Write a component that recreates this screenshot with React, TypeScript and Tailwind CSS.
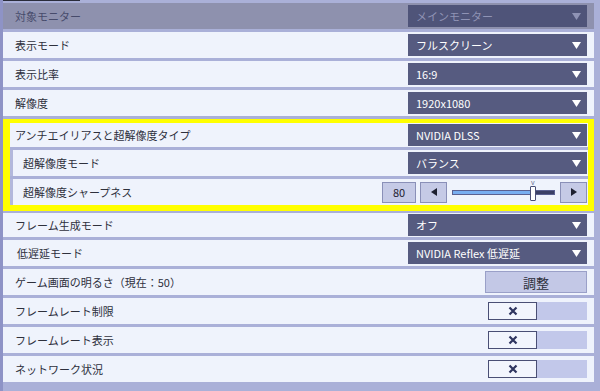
import React from "react";

const Tri = ({ color = "#ffffff" }: { color?: string }) => (
  <svg width="9" height="7" viewBox="0 0 9 7">
    <polygon points="0,0 9,0 4.5,7" fill={color} />
  </svg>
);

const Dropdown = ({ value, disabled = false }: { value: string; disabled?: boolean }) => (
  <div
    className={
      "w-[179px] h-[22px] flex items-center justify-between pl-[8px] pr-[6px] " +
      (disabled ? "bg-[#4f5479] text-[#8f93b5]" : "bg-[#565b80] text-white")
    }
  >
    <span className="text-[11px] leading-none">{value}</span>
    <Tri color={disabled ? "#8f93b5" : "#ffffff"} />
  </div>
);

const Row = ({
  label,
  children,
  h = "h-[26px]",
  pl = "pl-[12px]",
}: {
  label: string;
  children?: React.ReactNode;
  h?: string;
  pl?: string;
}) => (
  <div className={`${h} ${pl} pr-[7px] bg-[#eff3fc] flex items-center justify-between`}>
    <span className="text-[11px] text-[#2e303c] leading-none">{label}</span>
    {children}
  </div>
);

const Toggle = () => (
  <div className="flex h-[18px]">
    <div className="w-[49px] h-[18px] bg-[#f2f5fd] border border-[#4a4f75] flex items-center justify-center">
      <svg width="10" height="10" viewBox="0 0 10 10">
        <path d="M1.5 1.5 L8.5 8.5 M8.5 1.5 L1.5 8.5" stroke="#2f3560" strokeWidth="2.2" strokeLinecap="butt" />
      </svg>
    </div>
    <div className="w-[50px] h-[18px] bg-[#c2c8ea]" />
  </div>
);

const ArrowBtn = ({ dir }: { dir: "l" | "r" }) => (
  <div className="w-[27px] h-[21px] bg-[#c5cae6] border border-[#8a90b8] flex items-center justify-center">
    <svg width="6" height="8" viewBox="0 0 6 8">
      {dir === "l" ? (
        <polygon points="6,0 6,8 0,4" fill="#1d2030" />
      ) : (
        <polygon points="0,0 0,8 6,4" fill="#1d2030" />
      )}
    </svg>
  </div>
);

export default function App() {
  return (
    <div className="w-[600px] h-[391px] overflow-hidden bg-[#aab0d8] font-['Noto_Sans_CJK_JP','Noto_Sans',sans-serif] flex">
      <div className="w-[3px] h-full bg-[#8e93c6]" />
      <div className="flex-1 flex flex-col">
        <div className="h-[3px] flex">
          <div className="w-[77px] h-[1px] bg-[#2a2c3a]" />
        </div>
        <div className="flex flex-col gap-[3px] pr-[6px]">
          <div className="h-[26px] pl-[12px] pr-[7px] bg-[#8e91ae] flex items-center justify-between">
            <span className="text-[11px] text-[#474b6b] leading-none">対象モニター</span>
            <Dropdown value="メインモニター" disabled />
          </div>
          <Row label="表示モード">
            <Dropdown value="フルスクリーン" />
          </Row>
          <Row label="表示比率">
            <Dropdown value="16:9" />
          </Row>
          <Row label="解像度">
            <Dropdown value="1920x1080" />
          </Row>

          <div className="border-[#ffff00] border-t-[4px] border-b-[6px] border-l-[7px] border-r-[6px] flex flex-col gap-[3px] bg-[#aab0d8]">
            <div className="h-[24px] pl-[5px] pr-[1px] bg-[#eff3fc] flex items-center justify-between">
              <span className="text-[11px] text-[#2e303c] leading-none">アンチエイリアスと超解像度タイプ</span>
              <Dropdown value="NVIDIA DLSS" />
            </div>
            <div className="h-[26px] pl-[10px] pr-[1px] bg-[#eff3fc] border-l-[3px] border-[#b3b8dc] flex items-center justify-between">
              <span className="text-[11px] text-[#2e303c] leading-none">超解像度モード</span>
              <Dropdown value="バランス" />
            </div>
            <div className="h-[26px] pl-[10px] pr-[1px] bg-[#eff3fc] border-l-[3px] border-[#b3b8dc] flex items-center justify-between">
              <span className="text-[11px] text-[#2e303c] leading-none">超解像度シャープネス</span>
              <div className="flex items-center">
                <div className="w-[34px] h-[21px] bg-[#c5cae6] border border-[#8a90b8] flex items-center justify-center text-[11px] text-[#1d2030] leading-none">
                  80
                </div>
                <div className="w-[4px]" />
                <ArrowBtn dir="l" />
                <div className="w-[103px] mx-[5px] h-[21px] relative flex items-center">
                  <div className="w-full h-[5px] flex border border-[#5a6090]">
                    <div className="w-[79px] h-full bg-[#78aef0]" />
                    <div className="flex-1 h-full bg-[#3b4066]" />
                  </div>
                  <div className="absolute left-[78px] top-[4px] w-[6px] h-[15px] bg-white border border-[#4a4f75] rounded-[1px]" />
                  <div className="absolute left-[79px] top-[-3px] text-[7px] leading-none text-[#6a6f90]">v</div>
                </div>
                <ArrowBtn dir="r" />
              </div>
            </div>
          </div>

          <div className="-mt-[1px]">
            <Row label="フレーム生成モード" h="h-[24px]">
              <Dropdown value="オフ" />
            </Row>
          </div>
          <Row label="低遅延モード" pl="pl-[14px]">
            <Dropdown value="NVIDIA Reflex 低遅延" />
          </Row>
          <Row label="ゲーム画面の明るさ（現在：50）">
            <div className="w-[102px] h-[22px] bg-[#c3c8e6] border border-[#9aa0c8] flex items-center justify-center text-[13px] text-[#2e303c] leading-none">
              調整
            </div>
          </Row>
          <Row label="フレームレート制限">
            <Toggle />
          </Row>
          <Row label="フレームレート表示">
            <Toggle />
          </Row>
          <Row label="ネットワーク状況">
            <Toggle />
          </Row>
        </div>
      </div>
    </div>
  );
}
